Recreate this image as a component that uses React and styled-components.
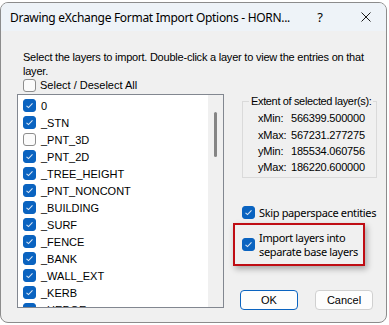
import styled, { createGlobalStyle } from "styled-components";

const GlobalStyle = createGlobalStyle`
  body {
    margin: 0;
    background: #ffffff;
    font-family: "Liberation Sans", Arial, sans-serif;
    font-size: 11px;
    color: #000;
  }
`;

const layers = [
  { name: "0", on: true },
  { name: "_STN", on: true },
  { name: "_PNT_3D", on: false },
  { name: "_PNT_2D", on: true },
  { name: "_TREE_HEIGHT", on: true },
  { name: "_PNT_NONCONT", on: true },
  { name: "_BUILDING", on: true },
  { name: "_SURF", on: true },
  { name: "_FENCE", on: true },
  { name: "_BANK", on: true },
  { name: "_WALL_EXT", on: true },
  { name: "_KERB", on: true },
  { name: "_HEDGE", on: true },
];

const extents = [
  ["xMin:", "566399.500000"],
  ["xMax:", "567231.277275"],
  ["yMin:", "185534.060756"],
  ["yMax:", "186220.600000"],
];

const Window = styled.div`
  width: 385px;
  height: 319px;
  margin-top: 2px;
  border: 1px solid #8c8c8c;
  border-radius: 8px;
  overflow: hidden;
  display: flex;
  flex-direction: column;
  background: #f0f0f0;
`;

const TitleBar = styled.div`
  height: 28px;
  flex: none;
  display: flex;
  align-items: center;
  padding-left: 9px;
  background: #eef3f8;
  font-family: "Noto Sans", sans-serif;
  font-size: 12px;
  letter-spacing: -0.3px;
`;

const Title = styled.div`
  flex: 1;
  white-space: nowrap;
`;

const TitleButton = styled.div`
  width: ${(p) => p.$w}px;
  display: flex;
  justify-content: center;
  align-items: center;
  font-family: "Noto Sans", sans-serif;
  font-size: 13px;
`;

const Body = styled.div`
  flex: 1;
  padding: 19px 14px 14px 16px;
  display: flex;
  flex-direction: column;
`;

const Instruction = styled.div`
  padding-left: 6px;
  line-height: 14px;
  white-space: nowrap;
  letter-spacing: -0.22px;
`;

const CheckRow = styled.label`
  display: flex;
  align-items: center;
  gap: ${(p) => p.$gap || 4}px;
  line-height: 14px;
  padding-left: ${(p) => p.$indent || 0}px;
  margin-top: ${(p) => p.$top || 0}px;
  font-family: ${(p) => (p.$ui ? '"Noto Sans", sans-serif' : "inherit")};
  letter-spacing: ${(p) => (p.$ui ? "-0.35px" : "0")};
  white-space: nowrap;
`;

const Box = styled.span`
  width: 13px;
  height: 13px;
  flex: none;
  box-sizing: border-box;
  border-radius: 3px;
  display: flex;
  align-items: center;
  justify-content: center;
  background: ${(p) => (p.$on ? "#0a63c0" : "#fbfbfb")};
  border: 1px solid ${(p) => (p.$on ? "#0a63c0" : "#8d8d8d")};
`;

const Main = styled.div`
  display: flex;
  gap: 9px;
  margin-top: 2px;
  align-items: flex-start;
`;

const ListBox = styled.div`
  width: 207px;
  height: 214px;
  flex: none;
  box-sizing: border-box;
  border: 1px solid #828790;
  background: #fff;
  display: flex;
`;

const Items = styled.div`
  flex: 1;
  overflow: hidden;
  padding: 2px 0 0 5px;
`;

const Item = styled.div`
  height: 17px;
  display: flex;
  align-items: center;
  gap: 5px;
  white-space: nowrap;
`;

const Track = styled.div`
  width: 15px;
  background: #f0f0f0;
  display: flex;
  justify-content: center;
`;

const Thumb = styled.div`
  width: 3px;
  height: 45px;
  margin-top: 17px;
  border-radius: 2px;
  background: #858585;
`;

const Side = styled.div`
  width: 140px;
  flex: none;
  display: flex;
  flex-direction: column;
`;

const Group = styled.fieldset`
  min-width: 0;
  width: 135px;
  box-sizing: border-box;
  margin: 1px 0 0 9px;
  padding: 2px 0 1px 15px;
  border: 1px solid #dadada;
  border-radius: 0;
`;

const Legend = styled.legend`
  margin-left: -9px;
  padding: 0 2px;
  line-height: 13px;
  white-space: nowrap;
  letter-spacing: -0.35px;
`;

const ExtentGrid = styled.div`
  display: grid;
  grid-template-columns: 33px auto;
  grid-auto-rows: 16.4px;
  align-items: center;
  letter-spacing: -0.2px;
  white-space: nowrap;
`;

const Highlight = styled.div`
  width: 132px;
  box-sizing: border-box;
  margin-top: 3px;
  padding: 6px 0 5px 7px;
  border: 2px solid #bf0d14;
  box-shadow: 2px 3px 6px rgba(0, 0, 0, 0.3);
`;

const Buttons = styled.div`
  display: flex;
  gap: 17px;
  margin: 24px 0 0 7px;
`;

const Button = styled.button`
  width: 58px;
  height: 20px;
  padding: 0;
  border-radius: 4px;
  background: #fdfdfd;
  border: 1px solid ${(p) => (p.$primary ? "#0a63c0" : "#d0d0d0")};
  font-family: "Liberation Sans", Arial, sans-serif;
  font-size: 11px;
  color: #000;
`;

const Check = ({ on }) => (
  <Box $on={on}>
    {on && (
      <svg width="9" height="9" viewBox="0 0 9 9">
        <polyline
          points="1.5,4.8 3.5,6.6 7.5,2.4"
          fill="none"
          stroke="#d9e6f5"
          strokeWidth="1.1"
        />
      </svg>
    )}
  </Box>
);

const CloseIcon = () => (
  <svg width="10" height="10" viewBox="0 0 10 10">
    <path d="M0.5 0.5 L9.5 9.5 M9.5 0.5 L0.5 9.5" stroke="#1a1a1a" strokeWidth="1" />
  </svg>
);

export default function App() {
  return (
    <>
      <GlobalStyle />
      <Window>
        <TitleBar>
          <Title>Drawing eXchange Format Import Options - HORN...</Title>
          <TitleButton $w={52}>?</TitleButton>
          <TitleButton $w={40}>
            <CloseIcon />
          </TitleButton>
        </TitleBar>
        <Body>
          <Instruction>
            Select the layers to import. Double-click a layer to view the entries on that
            <br />
            layer.
          </Instruction>
          <CheckRow $indent={6}>
            <Check on={false} />
            Select / Deselect All
          </CheckRow>
          <Main>
            <ListBox>
              <Items>
                {layers.map((l) => (
                  <Item key={l.name}>
                    <Check on={l.on} />
                    {l.name}
                  </Item>
                ))}
              </Items>
              <Track>
                <Thumb />
              </Track>
            </ListBox>
            <Side>
              <Group>
                <Legend>Extent of selected layer(s):</Legend>
                <ExtentGrid>
                  {extents.flat().map((t) => (
                    <span key={t}>{t}</span>
                  ))}
                </ExtentGrid>
              </Group>
              <CheckRow $indent={9} $top={28} $ui>
                <Check on />
                Skip paperspace entities
              </CheckRow>
              <Highlight>
                <CheckRow $ui>
                  <Check on />
                  <span>
                    Import layers into
                    <br />
                    separate base layers
                  </span>
                </CheckRow>
              </Highlight>
              <Buttons>
                <Button $primary>OK</Button>
                <Button>Cancel</Button>
              </Buttons>
            </Side>
          </Main>
        </Body>
      </Window>
    </>
  );
}
